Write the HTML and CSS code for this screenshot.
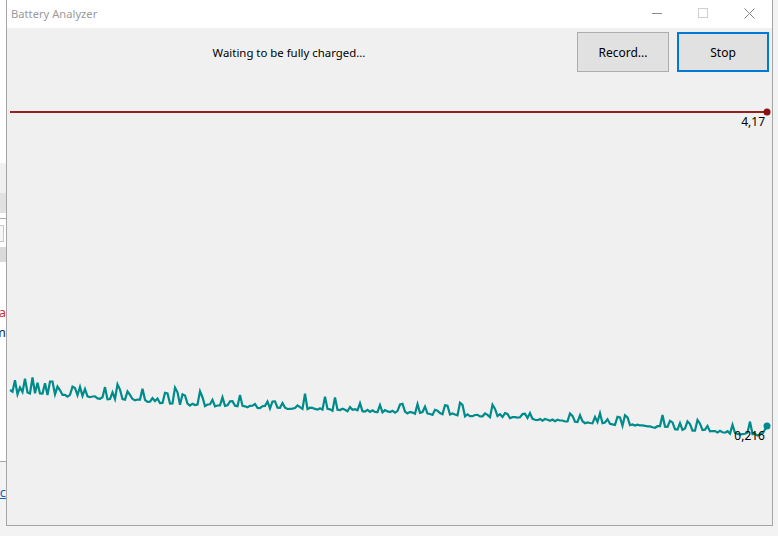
FILE: index.html
```html
<!DOCTYPE html>
<html lang="en">
<head>
<meta charset="utf-8">
<title>Battery Analyzer</title>
<link rel="stylesheet" href="styles.css">
</head>
<body>
<div class="page">
  <div class="backdrop">
    <div class="bd bd-top"></div>
    <div class="bd bd-light"></div>
    <div class="bd bd-gray"></div>
    <div class="bd bd-sep"></div>
    <div class="bd bd-field"><div class="bd-box"></div></div>
    <div class="bd bd-gray2"></div>
    <div class="bd bd-body">
      <div class="bd-line bd-red">Da</div>
      <div class="bd-line bd-dark">Im</div>
    </div>
    <div class="bd bd-foot">
      <div class="bd-line bd-link">Lc</div>
    </div>
  </div>

  <div class="window">
    <div class="titlebar">
      <span class="title">Battery Analyzer</span>
      <div class="caption-btns">
        <span class="cap">
          <svg width="10" height="10" viewBox="0 0 10 10"><path d="M0 5.5H10" stroke="#8a8a8a" stroke-width="1"/></svg>
        </span>
        <span class="cap">
          <svg width="10" height="10" viewBox="0 0 10 10"><rect x="0.5" y="0.5" width="9" height="9" fill="none" stroke="#cfcfcf" stroke-width="1"/></svg>
        </span>
        <span class="cap">
          <svg width="11" height="11" viewBox="0 0 11 11"><path d="M0.5 0.5L10.5 10.5M10.5 0.5L0.5 10.5" stroke="#8a8a8a" stroke-width="1"/></svg>
        </span>
      </div>
    </div>
    <div class="client">
      <div class="header">
        <div class="status">Waiting to be fully charged...</div>
        <button class="btn">Record...</button>
        <button class="btn btn-default">Stop</button>
      </div>
      <svg class="chart" width="765" height="453" viewBox="0 0 765 453">
        <line x1="3" y1="40" x2="760" y2="40" stroke="#962020" stroke-width="2"/>
        <circle cx="760" cy="40" r="3.5" fill="#8b1010"/>
        <text x="758" y="54" text-anchor="end" class="chart-label">4,17</text>
        <polyline id="teal" points="3,318 760,354" fill="none" stroke="#008b8b" stroke-width="2.2" stroke-linejoin="miter"/>
        <circle cx="760" cy="354" r="3.5" fill="#008b8b"/>
        <text x="758" y="368" text-anchor="end" class="chart-label">0,216</text>
      </svg>
    </div>
  </div>

  <div class="rightstrip"></div>
</div>
<script src="chart.js"></script>
</body>
</html>
```

FILE: styles.css
```css
* { box-sizing: border-box; }
html, body { margin: 0; padding: 0; }
body {
  background: #f3f3f3;
  font-family: "Noto Sans", "Open Sans", sans-serif;
  width: 778px;
  height: 536px;
  overflow: hidden;
}
.page {
  display: flex;
  align-items: flex-start;
  width: 778px;
  height: 536px;
}

/* partially visible window behind */
.backdrop {
  width: 6px;
  height: 536px;
  display: flex;
  flex-direction: column;
  flex: none;
  overflow: hidden;
}
.bd { flex: none; width: 6px; }
.bd-top { height: 163px; background: #ffffff; }
.bd-light { height: 30px; background: #f0f0f0; }
.bd-gray { height: 20px; background: #e1e1e1; }
.bd-sep { height: 6px; background: #ffffff; border-bottom: 1px solid #adadad; }
.bd-field { height: 28px; background: #ffffff; padding-top: 6px; }
.bd-box { height: 17px; width: 4px; border: 1px solid #c8c8c8; border-left: 0; background: #f7f7f7; }
.bd-gray2 { height: 15px; background: #dadada; }
.bd-body {
  height: 200px;
  background: #ffffff;
  border-bottom: 1px solid #a8a8a8;
  padding-top: 40px;
}
.bd-foot { flex: 1; background: #f3f3f3; padding-top: 20px; }
.bd-line {
  display: flex;
  justify-content: flex-end;
  white-space: nowrap;
  font-size: 13px;
  line-height: 20px;
  width: 6px;
  overflow: hidden;
}
.bd-red { color: #d03030; }
.bd-dark { color: #1a2a50; }
.bd-link { color: #1060c0; text-decoration: underline; }

.window {
  width: 767px;
  height: 526px;
  flex: none;
  border: 1px solid #a5a5a5;
  border-top: 0;
  background: #f0f0f0;
  display: flex;
  flex-direction: column;
}
.titlebar {
  height: 28px;
  background: #ffffff;
  display: flex;
  align-items: center;
  flex: none;
}
.title {
  flex: 1;
  padding-left: 4px;
  font-size: 11.2px;
  color: #9a9a9a;
  padding-bottom: 2px;
}
.caption-btns { display: flex; height: 28px; }
.cap {
  width: 46px;
  height: 28px;
  display: flex;
  align-items: center;
  justify-content: center;
  padding-bottom: 2px;
}
.cap svg { display: block; }

.client {
  flex: 1;
  display: flex;
  flex-direction: column;
}
.header {
  display: flex;
  align-items: center;
  height: 44px;
  padding: 4px 3px 0 0;
  gap: 8px;
}
.status {
  flex: 1;
  text-align: center;
  font-size: 11.4px;
  color: #000;
  padding-left: 2px;
}
.btn {
  width: 92px;
  height: 40px;
  flex: none;
  background: #e1e1e1;
  border: 1px solid #adadad;
  font-family: inherit;
  font-size: 12px;
  color: #000;
  padding: 0;
  margin: 0;
}
.btn-default { border: 2px solid #0078d7; }
.chart { display: block; flex: none; }
.chart-label {
  font-family: "Noto Sans", "Open Sans", sans-serif;
  font-size: 12px;
  fill: #000;
}
```

FILE: chart.js
```js
(function () {
  var seed = 4242;
  function rnd() {
    seed = (seed * 1103515245 + 12345) % 2147483648;
    return seed / 2147483648;
  }
  var knots = [[3, 322], [50, 324], [190, 334], [390, 341], [540, 349], [690, 359], [752, 364]];
  function base(x) {
    for (var i = 0; i < knots.length - 1; i++) {
      var a = knots[i], b = knots[i + 1];
      if (x >= a[0] && x <= b[0]) {
        return a[1] + (b[1] - a[1]) * (x - a[0]) / (b[0] - a[0]);
      }
    }
    return knots[knots.length - 1][1];
  }
  var pts = ['3,318'];
  var spikeRun = 0;
  var lastH = 0;
  for (var x = 5.5; x <= 752; x += 2.5) {
    var p = x < 60 ? 0.6 : (x < 300 ? 0.32 : 0.27);
    var amp = x < 60 ? 14 : (x < 300 ? 13 : 10);
    var h;
    if (spikeRun === 1 && rnd() < 0.35) {
      h = lastH * (0.6 + rnd() * 0.5);
      spikeRun = 2;
    } else if (spikeRun === 0 && rnd() < p) {
      h = 4 + rnd() * amp;
      spikeRun = 1;
    } else {
      h = rnd() * 2.5;
      spikeRun = 0;
    }
    lastH = h;
    var y = base(x) - h;
    pts.push(x.toFixed(1) + ',' + y.toFixed(1));
  }
  pts.push('756,361');
  pts.push('760,354');
  document.getElementById('teal').setAttribute('points', pts.join(' '));
})();
```
